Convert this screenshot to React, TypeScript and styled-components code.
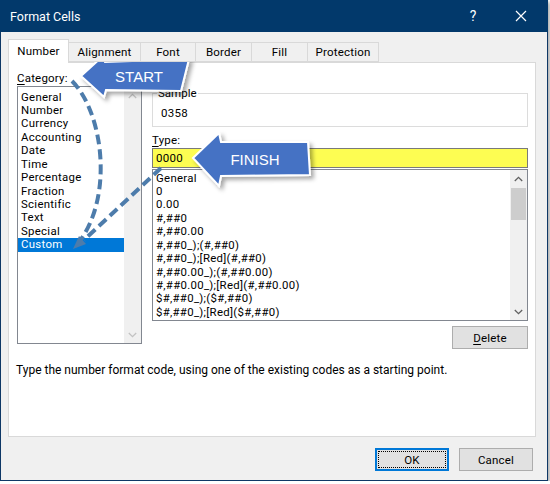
import styled, { createGlobalStyle } from "styled-components";

const UI = `Roboto, "Noto Sans", sans-serif`;

const GlobalStyle = createGlobalStyle`
  html, body {
    margin: 0;
    padding: 0;
    background: #ffffff;
  }
  body {
    font-family: ${UI};
    font-size: 11.5px;
    color: #000;
  }
`;

const Window = styled.div`
  position: relative;
  width: 546px;
  height: 480px;
  background: #f0f0f0;
  border: 1px solid #0e3866;
  border-top: none;
  box-shadow: 2px 2px 4px rgba(0, 0, 0, 0.35);
  display: flex;
  flex-direction: column;
`;

const TitleBar = styled.div`
  height: 32px;
  margin: 0 -1px;
  background: #02396b;
  color: #fff;
  display: flex;
  align-items: center;
  padding: 0 3px 0 10px;
  font-size: 12.5px;
`;

const Title = styled.div`
  flex: 1;
`;

const TitleButton = styled.div`
  width: 48px;
  height: 32px;
  display: flex;
  align-items: center;
  justify-content: center;
  font-size: 14px;
`;

const Body = styled.div`
  padding: 7px 7px 0 7px;
  display: flex;
  flex-direction: column;
`;

const TabStrip = styled.div`
  display: flex;
  align-items: flex-end;
  height: 23px;
  position: relative;
  z-index: 1;
`;

const Tab = styled.div<{ $w: number; $active?: boolean }>`
  width: ${(p) => p.$w}px;
  height: ${(p) => (p.$active ? 24 : 20)}px;
  margin-bottom: ${(p) => (p.$active ? -1 : 0)}px;
  box-sizing: border-box;
  border: 1px solid #d9d9d9;
  border-bottom: ${(p) => (p.$active ? "none" : "1px solid #d9d9d9")};
  margin-left: ${(p) => (p.$active ? 0 : -1)}px;
  background: ${(p) => (p.$active ? "#fff" : "#f0f0f0")};
  display: flex;
  align-items: center;
  justify-content: center;
  padding-bottom: ${(p) => (p.$active ? 2 : 0)}px;
  letter-spacing: 0.2px;
  &:first-child {
    margin-left: 0;
  }
`;

const Panel = styled.div`
  width: 528px;
  height: 375px;
  box-sizing: border-box;
  background: #fff;
  border: 1px solid #d9d9d9;
  padding: 7px 7px 0 8px;
  display: flex;
  flex-direction: column;
`;

const Columns = styled.div`
  display: flex;
  gap: 10px;
`;

const LeftCol = styled.div`
  width: 125px;
  display: flex;
  flex-direction: column;
`;

const RightCol = styled.div`
  width: 376px;
  display: flex;
  flex-direction: column;
`;

const Label = styled.div<{ $top?: number }>`
  height: 16px;
  line-height: 16px;
  margin-top: ${(p) => p.$top ?? 0}px;
  letter-spacing: 0.2px;
  u {
    text-decoration: underline;
    text-underline-offset: 2px;
  }
`;

const ListBox = styled.div<{ $h: number; $top?: number }>`
  height: ${(p) => p.$h}px;
  margin-top: ${(p) => p.$top ?? 0}px;
  box-sizing: border-box;
  border: 1px solid #828790;
  background: #fff;
  display: flex;
`;

const ListItems = styled.div<{ $pad: number }>`
  flex: 1;
  padding-top: ${(p) => p.$pad}px;
  overflow: hidden;
`;

const Item = styled.div<{ $selected?: boolean; $indent: number }>`
  height: 13.45px;
  line-height: 13.45px;
  padding-left: ${(p) => p.$indent}px;
  white-space: nowrap;
  font-size: 11.4px;
  letter-spacing: 0.3px;
  background: ${(p) => (p.$selected ? "#0078d7" : "transparent")};
  color: ${(p) => (p.$selected ? "#fff" : "#000")};
`;

const ScrollBar = styled.div`
  width: 17px;
  background: #f0f0f0;
  display: flex;
  flex-direction: column;
  align-items: stretch;
`;

const ScrollArrow = styled.div`
  height: 17px;
  display: flex;
  align-items: center;
  justify-content: center;
`;

const Track = styled.div`
  flex: 1;
  display: flex;
  flex-direction: column;
`;

const Thumb = styled.div`
  height: 32px;
  margin: 1px 1px 0 1px;
  background: #cdcdcd;
`;

const Group = styled.fieldset`
  margin: 17px 0 0 0;
  padding: 6px 8px 4px 8px;
  border: 1px solid #dcdcdc;
  height: 40px;
  box-sizing: border-box;
  min-width: 0;
`;

const Legend = styled.legend`
  padding: 0 1px;
  margin-left: -4px;
  line-height: 13px;
`;

const SampleText = styled.div`
  line-height: 14px;
  letter-spacing: 0.3px;
`;

const TypeInput = styled.div`
  height: 20px;
  box-sizing: border-box;
  border: 1px solid #7a7a7a;
  background: #fdfd52;
  padding-left: 3px;
  line-height: 18px;
  letter-spacing: 0.3px;
`;

const ButtonRow = styled.div<{ $pad?: number; $top?: number }>`
  display: flex;
  justify-content: flex-end;
  gap: 10px;
  margin-top: ${(p) => p.$top ?? 0}px;
  padding-right: ${(p) => p.$pad ?? 0}px;
`;

const Button = styled.div<{ $default?: boolean; $w?: number }>`
  width: ${(p) => p.$w ?? 74}px;
  height: 23px;
  box-sizing: border-box;
  background: #e1e1e1;
  border: 1px solid ${(p) => (p.$default ? "#0078d7" : "#adadad")};
  box-shadow: ${(p) => (p.$default ? "inset 0 0 0 1px #0078d7" : "none")};
  display: flex;
  align-items: center;
  justify-content: center;
  position: relative;
  letter-spacing: 0.2px;
  u {
    text-decoration: underline;
    text-underline-offset: 2px;
  }
  &::after {
    content: "";
    display: ${(p) => (p.$default ? "block" : "none")};
    position: absolute;
    inset: 2px;
    border: 1px dotted #000;
  }
`;

const Description = styled.div`
  margin-top: 14px;
  margin-left: -1px;
  font-size: 12px;
  line-height: 14px;
`;

const Footer = styled.div`
  margin-top: 11px;
`;

const Overlay = styled.svg`
  position: absolute;
  left: -1px;
  top: 0;
  pointer-events: none;
`;

const ArrowLabel = styled.text`
  font-family: "Liberation Sans", Arial, sans-serif;
  font-size: 15px;
  fill: #fff;
`;

const Chevron = ({ up, color }: { up?: boolean; color: string }) => (
  <svg width="9" height="6" viewBox="0 0 9 6">
    <polyline
      points={up ? "0.8,5 4.5,1.3 8.2,5" : "0.8,1 4.5,4.7 8.2,1"}
      fill="none"
      stroke={color}
      strokeWidth="1.3"
    />
  </svg>
);

const categories = [
  "General",
  "Number",
  "Currency",
  "Accounting",
  "Date",
  "Time",
  "Percentage",
  "Fraction",
  "Scientific",
  "Text",
  "Special",
  "Custom",
];

const formats = [
  "General",
  "0",
  "0.00",
  "#,##0",
  "#,##0.00",
  "#,##0_);(#,##0)",
  "#,##0_);[Red](#,##0)",
  "#,##0.00_);(#,##0.00)",
  "#,##0.00_);[Red](#,##0.00)",
  "$#,##0_);($#,##0)",
  "$#,##0_);[Red]($#,##0)",
];

const tabs = [
  { label: "Number", w: 61 },
  { label: "Alignment", w: 73 },
  { label: "Font", w: 56 },
  { label: "Border", w: 57 },
  { label: "Fill", w: 57 },
  { label: "Protection", w: 72 },
];

export default function App() {
  return (
    <>
      <GlobalStyle />
      <Window>
        <TitleBar>
          <Title>Format Cells</Title>
          <TitleButton>?</TitleButton>
          <TitleButton>
            <svg width="12" height="12" viewBox="0 0 12 12">
              <path d="M1 1 L11 11 M11 1 L1 11" stroke="#fff" strokeWidth="1.2" />
            </svg>
          </TitleButton>
        </TitleBar>
        <Body>
          <TabStrip>
            {tabs.map((t, i) => (
              <Tab key={t.label} $w={t.w} $active={i === 0}>
                {t.label}
              </Tab>
            ))}
          </TabStrip>
          <Panel>
            <Columns>
              <LeftCol>
                <Label>
                  <u>C</u>ategory:
                </Label>
                <ListBox $h={258}>
                  <ListItems $pad={3.5}>
                    {categories.map((c) => (
                      <Item key={c} $indent={3} $selected={c === "Custom"}>
                        {c}
                      </Item>
                    ))}
                  </ListItems>
                  <ScrollBar>
                    <ScrollArrow>
                      <Chevron up color="#c2c2c2" />
                    </ScrollArrow>
                    <Track />
                    <ScrollArrow>
                      <Chevron color="#c2c2c2" />
                    </ScrollArrow>
                  </ScrollBar>
                </ListBox>
              </LeftCol>
              <RightCol>
                <Group>
                  <Legend>Sample</Legend>
                  <SampleText>0358</SampleText>
                </Group>
                <Label $top={5}>
                  <u>T</u>ype:
                </Label>
                <TypeInput>0000</TypeInput>
                <ListBox $h={152} $top={1}>
                  <ListItems $pad={1.5}>
                    {formats.map((f) => (
                      <Item key={f} $indent={3}>
                        {f}
                      </Item>
                    ))}
                  </ListItems>
                  <ScrollBar>
                    <ScrollArrow>
                      <Chevron up color="#606060" />
                    </ScrollArrow>
                    <Track>
                      <Thumb />
                    </Track>
                    <ScrollArrow>
                      <Chevron color="#606060" />
                    </ScrollArrow>
                  </ScrollBar>
                </ListBox>
                <ButtonRow $top={5}>
                  <Button $w={76}>
                    <span>
                      <u>D</u>elete
                    </span>
                  </Button>
                </ButtonRow>
              </RightCol>
            </Columns>
            <Description>
              Type the number format code, using one of the existing codes as a starting point.
            </Description>
          </Panel>
          <Footer>
            <ButtonRow $pad={7}>
              <Button $default>OK</Button>
              <Button>Cancel</Button>
            </ButtonRow>
          </Footer>
        </Body>

        <Overlay width="548" height="481" viewBox="0 0 548 481">
          <defs>
            <filter id="shadow" x="-20%" y="-30%" width="150%" height="170%">
              <feDropShadow dx="3" dy="3" stdDeviation="2" floodColor="#000" floodOpacity="0.35" />
            </filter>
          </defs>
          <g stroke="#4d7cab" strokeWidth="4" fill="none" strokeDasharray="10 5">
            <path d="M72 81 C 103 112, 114 196, 79 242" />
            <path d="M161 168 L 84 240" />
          </g>
          <path d="M73 249 L79 236 L86 244 z" fill="#4d7cab" />

          <g filter="url(#shadow)">
            <polygon
              points="81,76 103,56 105,62 189,59 181,91 106,90 104,97"
              fill="#4472c4"
              stroke="#fff"
              strokeWidth="2"
            />
            <polygon
              points="193,158 219,133 221,142 308,142 310,175 221,176 219,186"
              fill="#4472c4"
              stroke="#fff"
              strokeWidth="2"
            />
          </g>
          <ArrowLabel x="139" y="82" textAnchor="middle">
            START
          </ArrowLabel>
          <ArrowLabel x="255" y="165" textAnchor="middle">
            FINISH
          </ArrowLabel>
        </Overlay>
      </Window>
    </>
  );
}
